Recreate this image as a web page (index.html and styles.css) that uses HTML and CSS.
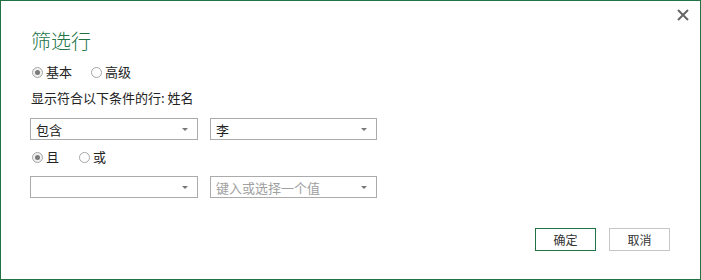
FILE: index.html
```html
<!DOCTYPE html>
<html lang="zh-CN">
<head>
  <meta charset="UTF-8" />
  <title>筛选行</title>
  <link rel="stylesheet" href="styles.css">
</head>
<body>
  <div class="dialog">
    <button class="close" aria-label="关闭">
      <svg width="12" height="12" viewBox="0 0 12 12"><path d="M1 1L11 11M11 1L1 11" stroke="#666" stroke-width="2"/></svg>
    </button>

    <h1 class="title">筛选行</h1>

    <div class="radios mode">
      <label class="radio"><span class="dot checked"></span>基本</label>
      <label class="radio"><span class="dot"></span>高级</label>
    </div>

    <p class="hint">显示符合以下条件的行: 姓名</p>

    <div class="row">
      <div class="select"><span>包含</span><i class="arrow"></i></div>
      <div class="select"><span>李</span><i class="arrow"></i></div>
    </div>

    <div class="radios join">
      <label class="radio"><span class="dot checked"></span>且</label>
      <label class="radio"><span class="dot"></span>或</label>
    </div>

    <div class="row">
      <div class="select"><span></span><i class="arrow"></i></div>
      <div class="select"><span class="placeholder">键入或选择一个值</span><i class="arrow"></i></div>
    </div>

    <div class="actions">
      <button class="btn primary">确定</button>
      <button class="btn">取消</button>
    </div>
  </div>
</body>
</html>
```

FILE: styles.css
```css
*, *::before, *::after { box-sizing: border-box; }
body {
  margin: 0;
  font-family: "Noto Sans CJK SC", "Liberation Sans", sans-serif;
  font-size: 13px;
  color: #222;
  background: white;
}
.dialog {
  position: relative;
  width: 701px;
  height: 280px;
  border: 1px solid #217346;
  padding: 28px 30px 0 30px;
}
.close {
  position: absolute;
  top: 8px;
  right: 11px;
  border: none;
  background: none;
  padding: 0;
  width: 12px;
  height: 12px;
  display: flex;
}
.title {
  margin: 0;
  font-size: 20px;
  line-height: 24px;
  font-weight: 300;
  color: #217346;
}
.radios {
  display: flex;
  gap: 18px;
  height: 20px;
  align-items: center;
}
.mode { margin-top: 9px; }
.join { margin-top: 7px; gap: 19px; }
.radio {
  display: flex;
  align-items: center;
  gap: 3px;
  line-height: 20px;
}
.dot {
  width: 11px;
  height: 11px;
  border: 1px solid #a6a6a6;
  border-radius: 50%;
  margin-left: 1px;
  display: flex;
  align-items: center;
  justify-content: center;
}
.dot.checked { background: #f0f0f0; }
.dot.checked::after {
  content: "";
  width: 5px;
  height: 5px;
  border-radius: 50%;
  background: #7a7a7a;
}
.hint {
  margin: 6px 0 0;
  line-height: 20px;
}
.row {
  display: flex;
  gap: 12px;
  margin: 10px 0 0 -1px;
}
.row + .radios { margin-top: 7px; }
.radios + .row { margin-top: 9px; }
.select {
  width: 168px;
  height: 22px;
  border: 1px solid #ababab;
  display: flex;
  align-items: center;
  justify-content: space-between;
  padding: 0 9px 0 5px;
}
.select + .select { width: 167px; }
.placeholder { color: #a0a0a0; }
.arrow {
  width: 0;
  height: 0;
  border-left: 3px solid transparent;
  border-right: 3px solid transparent;
  border-top: 3px solid #777;
  margin-top: 1px;
}
.actions {
  display: flex;
  justify-content: flex-end;
  gap: 13px;
  margin-top: 30px;
}
.btn {
  width: 61px;
  height: 23px;
  font: inherit;
  font-size: 12px;
  color: #333;
  background: white;
  border: 1px solid #c6c6c6;
  padding: 0;
}
.btn.primary { border-color: #217346; }
```
